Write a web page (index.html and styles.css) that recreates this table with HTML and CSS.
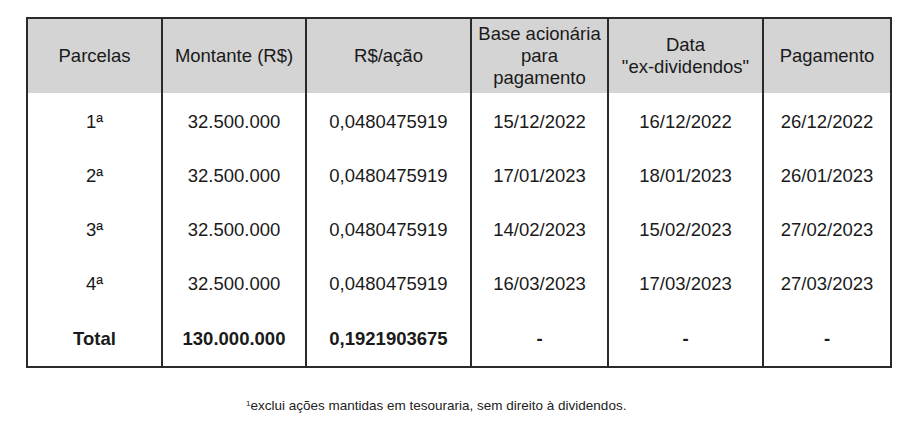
FILE: index.html
```html
<!DOCTYPE html>
<html lang="pt">
<head>
<meta charset="utf-8">
<link rel="stylesheet" href="styles.css">
</head>
<body>
<table class="div-table">
  <colgroup>
    <col class="c1"><col class="c2"><col class="c3"><col class="c4"><col class="c5"><col class="c6">
  </colgroup>
  <thead>
    <tr>
      <th>Parcelas</th>
      <th>Montante (R$)</th>
      <th>R$/ação</th>
      <th>Base acionária<br>para<br>pagamento</th>
      <th>Data<br>"ex-dividendos"</th>
      <th>Pagamento</th>
    </tr>
  </thead>
  <tbody>
    <tr><td>1ª</td><td>32.500.000</td><td>0,0480475919</td><td>15/12/2022</td><td>16/12/2022</td><td>26/12/2022</td></tr>
    <tr><td>2ª</td><td>32.500.000</td><td>0,0480475919</td><td>17/01/2023</td><td>18/01/2023</td><td>26/01/2023</td></tr>
    <tr><td>3ª</td><td>32.500.000</td><td>0,0480475919</td><td>14/02/2023</td><td>15/02/2023</td><td>27/02/2023</td></tr>
    <tr><td>4ª</td><td>32.500.000</td><td>0,0480475919</td><td>16/03/2023</td><td>17/03/2023</td><td>27/03/2023</td></tr>
    <tr class="total"><td>Total</td><td>130.000.000</td><td>0,1921903675</td><td>-</td><td>-</td><td>-</td></tr>
  </tbody>
</table>
<p class="note"><sup>1</sup>exclui ações mantidas em tesouraria, sem direito à dividendos.</p>
</body>
</html>
```
FILE: styles.css
```css
html, body {
  margin: 0;
  padding: 0;
  background: #ffffff;
}
body {
  font-family: "Liberation Sans", Arial, sans-serif;
  color: #1a1a1a;
}
.div-table {
  margin: 17px 0 0 26px;
  width: 866px;
  table-layout: fixed;
  border-collapse: collapse;
  border: 2px solid #2a2a2a;
  font-size: 18.5px;
}
.c1 { width: 135px; }
.c2 { width: 144px; }
.c3 { width: 165px; }
.c4 { width: 137px; }
.c5 { width: 155px; }
.c6 { width: 128px; }
.div-table th,
.div-table td {
  border-left: 2px solid #2a2a2a;
  border-right: 2px solid #2a2a2a;
  text-align: center;
  vertical-align: middle;
  padding: 0;
}
.div-table th {
  background: #d4d4d4;
  font-weight: normal;
  height: 74px;
  line-height: 22px;
}
.div-table td {
  height: 51px;
  line-height: 22px;
  padding-top: 3px;
}
.total td {
  font-weight: bold;
  height: 54px;
  padding-top: 3px;
}
.note {
  margin: 30px 0 0 246px;
  font-size: 13.5px;
  color: #222;
}
.note sup {
  font-size: 8px;
  vertical-align: 4px;
  line-height: 0;
}
```
